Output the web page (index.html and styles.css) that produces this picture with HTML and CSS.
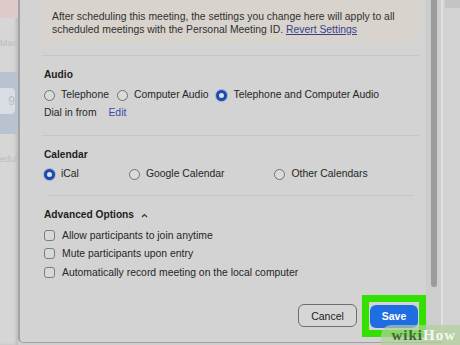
FILE: index.html
```html
<!DOCTYPE html>
<html lang="en">
<head>
    <meta charset="UTF-8">
    <title>Meeting Settings</title>
    <link rel="stylesheet" href="styles.css">
</head>
<body>

<div class="screen">
    <!-- Window behind the sheet -->
    <div class="backdrop-left">
        <div class="bl-pink"></div>
        <div class="bl-text">Mac</div>
        <div class="bl-blue"><div class="bl-tile">9</div></div>
        <div class="bl-text bl-sched">edul</div>
    </div>

    <!-- Settings Sheet -->
    <div class="dialog">
        <div class="sheet-body">
            <div class="notice">
                <div>After scheduling this meeting, the settings you change here will apply to all</div>
                <div>scheduled meetings with the Personal Meeting ID. <a href="#" class="link">Revert Settings</a></div>
            </div>
            <hr class="divider">

            <!-- Audio -->
            <h3 class="section-title">Audio</h3>
            <div class="option-row audio-row">
                <label class="option"><span class="radio"></span>Telephone</label>
                <label class="option"><span class="radio"></span>Computer Audio</label>
                <label class="option"><span class="radio checked"></span>Telephone and Computer Audio</label>
            </div>
            <div class="dial-in">Dial in from <a href="#" class="edit">Edit</a></div>
            <hr class="divider calendar-divider">

            <!-- Calendar -->
            <h3 class="section-title">Calendar</h3>
            <div class="option-row calendar-row">
                <label class="option"><span class="radio checked"></span>iCal</label>
                <label class="option"><span class="radio"></span>Google Calendar</label>
                <label class="option"><span class="radio"></span>Other Calendars</label>
            </div>
            <hr class="divider advanced-divider">

            <!-- Advanced Options -->
            <h3 class="section-title">Advanced Options
                <svg class="caret" width="7" height="5" viewBox="0 0 7 5"><path d="M1 4 L3.5 1.5 L6 4" fill="none" stroke="#333" stroke-width="1.2"/></svg>
            </h3>
            <div class="checks">
                <label class="option"><span class="checkbox"></span>Allow participants to join anytime</label>
                <label class="option"><span class="checkbox"></span>Mute participants upon entry</label>
                <label class="option"><span class="checkbox"></span>Automatically record meeting on the local computer</label>
            </div>

            <div class="actions">
                <button class="btn cancel-btn">Cancel</button>
                <div class="highlight">
                    <button class="btn save-btn">Save</button>
                </div>
            </div>
        </div>

        <div class="scrollbar"><div class="thumb"></div></div>
    </div>

    <div class="backdrop-right"><div class="br-tab"></div></div>
</div>

<div class="watermark"><span class="wm-wiki">wiki</span><span class="wm-how">How</span></div>

</body>
</html>
```

FILE: styles.css
```css
/* Base */
html, body {
    margin: 0;
    padding: 0;
}

body {
    font-family: 'Liberation Sans', Arial, sans-serif;
    font-size: 10.4px;
    color: #262626;
    background: #cfcfcf;
    width: 460px;
    height: 345px;
    overflow: hidden;
    position: relative;
}

.screen {
    display: flex;
    height: 345px;
}

/* Window behind the sheet */
.backdrop-left {
    width: 18px;
    display: flex;
    flex-direction: column;
    background: #d6d6d6;
    box-shadow: inset -2px 0 3px rgba(0, 0, 0, 0.12);
}

.bl-pink {
    height: 18px;
    background: #dccbc9;
}

.bl-text {
    margin-top: 20px;
    color: #bcbcbc;
    font-size: 9px;
    white-space: nowrap;
    overflow: hidden;
}

.bl-blue {
    margin-top: 24px;
    height: 62px;
    background: #b9c2d1;
    padding-top: 16px;
    box-sizing: border-box;
}

.bl-tile {
    width: 15px;
    height: 26px;
    background: #d9dde3;
    border-radius: 0 4px 4px 0;
    color: #b5bcc6;
    font-size: 12px;
    line-height: 26px;
    text-align: right;
}

.bl-sched {
    margin-top: 20px;
}

/* Sheet */
.dialog {
    display: flex;
    height: 342px;
    background: #d3d3d3;
    border-left: 2px solid #a4a4a4;
    border-bottom: 1px solid #a2a2a2;
    border-bottom-left-radius: 5px;
}

.sheet-body {
    width: 384px;
    padding-left: 22px;
    display: flex;
    flex-direction: column;
}

.notice {
    width: 377px;
    box-sizing: border-box;
    height: 43px;
    padding: 10px 0 0 10px;
    background: #d8d4cd;
    line-height: 13px;
    color: #303030;
    white-space: nowrap;
    border-radius: 0 0 4px 4px;
}

.link {
    color: #3b3f8c;
    text-decoration: underline;
}

.divider {
    width: 377px;
    margin: 12px 0 0 0;
    border: none;
    border-top: 1px solid #c6c6c6;
}

.calendar-divider {
    margin-top: 15px;
}

.advanced-divider {
    margin-top: 14px;
    width: 367px;
    margin-left: 5px;
}

.section-title {
    margin: 12px 0 0 2px;
    font-size: 10.2px;
    line-height: 14px;
    font-weight: bold;
    color: #1e1e1e;
    display: flex;
    align-items: center;
}

.caret {
    margin-left: 7px;
}

/* Radios and checkboxes */
.option-row {
    display: flex;
    margin: 6px 0 0 2px;
    line-height: 14px;
}

.audio-row {
    gap: 8px;
}

.calendar-row {
    gap: 50px;
    margin-top: 5px;
}

.option {
    display: flex;
    align-items: center;
    white-space: nowrap;
}

.radio {
    width: 11px;
    height: 11px;
    box-sizing: border-box;
    border: 1px solid #707070;
    border-radius: 50%;
    background: #dadada;
    margin-right: 6px;
}

.radio.checked {
    border: 3px solid #1c4cae;
    background: #d9e1f2;
    box-shadow: 0 0 0 1px rgba(70, 110, 200, 0.35);
}

.dial-in {
    margin: 4px 0 0 2px;
    line-height: 14px;
}

.edit {
    color: #3d4aa6;
    text-decoration: none;
    margin-left: 9px;
}

.checks {
    display: flex;
    flex-direction: column;
    margin: 4px 0 0 2px;
}

.checks .option {
    height: 18.5px;
}

.checkbox {
    width: 11px;
    height: 11px;
    box-sizing: border-box;
    border: 1px solid #7c7c7c;
    border-radius: 3px;
    background: #d8d8d8;
    margin-right: 7px;
}

/* Buttons */
.actions {
    display: flex;
    justify-content: flex-end;
    align-items: center;
    margin-top: 13px;
    width: 384px;
}

.btn {
    font-family: 'Liberation Sans', Arial, sans-serif;
    font-size: 10.5px;
    height: 23px;
    border-radius: 6px;
    cursor: pointer;
}

.cancel-btn {
    width: 59px;
    background: #d6d6d6;
    border: 1px solid #6e6e6e;
    color: #222;
    margin-right: 5px;
}

.highlight {
    border: 7px solid #33e000;
    padding: 3px 1px 2px 1px;
}

.save-btn {
    display: block;
    width: 48px;
    background: #1f6de3;
    border: none;
    color: #ffffff;
    font-weight: bold;
}

/* Scrollbar */
.scrollbar {
    width: 14px;
    border-left: 1px solid #c9c9c9;
    border-right: 2px solid #e1e1e1;
    background: #cdcdcd;
}

.thumb {
    width: 6px;
    height: 287px;
    margin-left: 4px;
    background: #9b9b9b;
    border-radius: 0 0 3px 3px;
}

.backdrop-right {
    flex: 1;
    background: #d2d2d2;
}

.br-tab {
    height: 8px;
    margin-left: 2px;
    background: #c3c3c3;
}

/* Watermark */
.watermark {
    position: absolute;
    right: 0;
    bottom: 0;
    padding: 1px 4px 0 10px;
    background: rgba(175, 208, 155, 0.7);
    border-top-left-radius: 10px;
    font-family: 'Liberation Serif', serif;
    font-weight: bold;
    font-size: 15px;
    letter-spacing: 1px;
    line-height: 19px;
}

.wm-wiki {
    color: #3a6a2c;
}

.wm-how {
    color: #f4f7f0;
}
```
